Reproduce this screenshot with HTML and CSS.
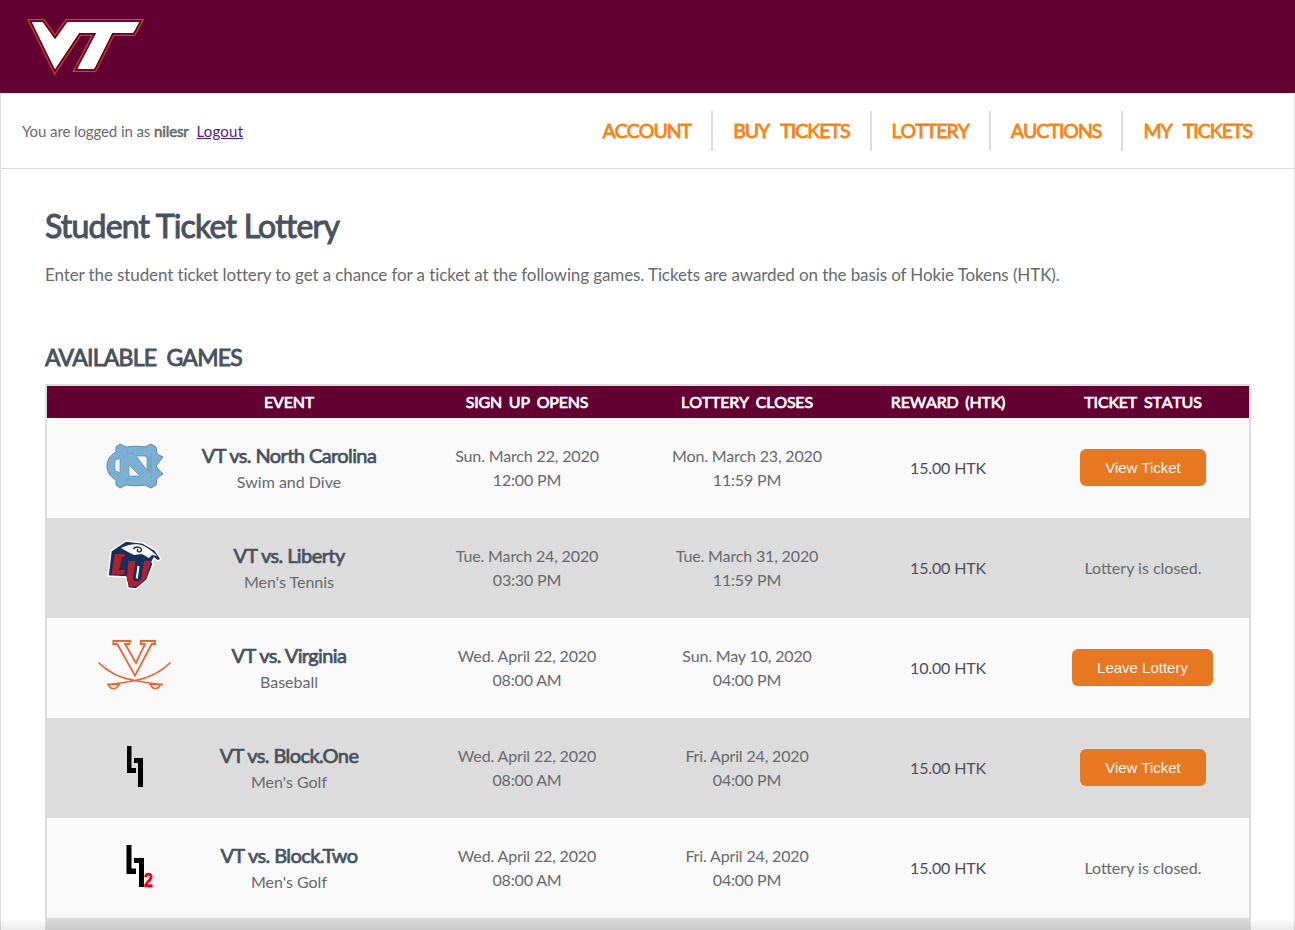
FILE: index.html
```html
<!DOCTYPE html>
<html lang="en">
<head>
    <meta charset="UTF-8">
    <meta name="viewport" content="width=device-width, initial-scale=1.0">
    <title>Student Ticket Lottery</title>
    <link rel="stylesheet" href="styles.css">
</head>
<body>
    <header class="banner">
        <svg class="vt-logo" viewBox="0 0 120 60" aria-label="VT">
            <g transform="translate(-26 -17)">
                <path class="vt-edge" d="M33.5 23.5H43.5L56 41 68.5 23.5H139.5L134 33.5H113L95 69.500H79L98 33.5H80L56 69.500Z"/>
                <path class="vt-gap" d="M33.5 23.5H43.5L56 41 68.5 23.5H139.5L134 33.5H113L95 69.500H79L98 33.5H80L56 69.500Z"/>
                <path class="vt-fill" d="M33.5 23.5H43.5L56 41 68.5 23.5H139.5L134 33.5H113L95 69.500H79L98 33.5H80L56 69.500Z"/>
            </g>
        </svg>
    </header>

    <div class="page">
        <nav class="topnav">
            <p class="login">You are logged in as <b>nilesr</b> <a href="#">Logout</a></p>
            <ul class="menu">
                <li><a href="#">ACCOUNT</a></li>
                <li><a href="#">BUY TICKETS</a></li>
                <li><a href="#">LOTTERY</a></li>
                <li><a href="#">AUCTIONS</a></li>
                <li><a href="#">MY TICKETS</a></li>
            </ul>
        </nav>

        <main class="content">
            <h1>Student Ticket Lottery</h1>
            <p class="intro">Enter the student ticket lottery to get a chance for a ticket at the following games. Tickets are awarded on the basis of Hokie Tokens (HTK).</p>

            <h2>AVAILABLE GAMES</h2>
            <table class="games">
                <colgroup>
                    <col class="col-logo"><col class="col-event"><col class="col-opens"><col class="col-closes"><col class="col-reward"><col class="col-status">
                </colgroup>
                <thead>
                    <tr>
                        <th></th>
                        <th>EVENT</th>
                        <th>SIGN UP OPENS</th>
                        <th>LOTTERY CLOSES</th>
                        <th>REWARD (HTK)</th>
                        <th>TICKET STATUS</th>
                    </tr>
                </thead>
                <tbody>
                    <tr>
                        <td class="logo-cell">
                            <svg class="team" viewBox="0 0 74 50">
                                <g transform="translate(9 4)">
                                    <path class="unc" d="M9 3 13 0 19 3C25 2 32 2 38 3L44 0 49 3 50 10 56 13 52 18 49 22 52 26 56 30 50 34 49 41 44 44 38 41C32 42 25 42 19 41L13 44 9 41 9 36C-3 30-3 14 9 8Z"/>
                                    <path class="unc-hole" d="M8.500 16 13 14.500V28.500L8.500 27C7.500 24 7.500 19 8.500 16ZM29 12H40V26ZM22 21 33 32H22Z"/>
                                    <path class="unc-line" d="M20 9H26L42 29V13H38M18 35H24M44 9V35"/>
                                </g>
                            </svg>
                        </td>
                        <td><span class="match">VT vs. North Carolina</span><span class="sport">Swim and Dive</span></td>
                        <td>Sun. March 22, 2020<br>12:00 PM</td>
                        <td>Mon. March 23, 2020<br>11:59 PM</td>
                        <td class="reward">15.00 HTK</td>
                        <td><button class="action view">View Ticket</button></td>
                    </tr>
                    <tr>
                        <td class="logo-cell">
                            <svg class="team" viewBox="0 0 74 50">
                                <g transform="translate(10 1)">
                                    <path class="lu-navy" d="M3 10 18 0 35 2 47 9 53 18 50 20 46 17 44 21 45 23 39 39 28 48 20 47 18 36 0 35Z"/>
                                    <path class="lu-white" d="M13 7C20 3 30 2 36 5 42 8 46 12 49 15L44 14 41 17 34 13 26 14 20 11Z"/>
                                    <path class="lu-line" d="M25 8C29 4 35 7 33 10 31 12 28 10 30 8"/>
                                    <path class="lu-red" d="M7 13H17L16.500 16H14L11 29H17L16 33.500H3.500Z"/>
                                    <path class="lu-red" d="M20.500 20H27.500L25 36.500C24.500 42 33 42 33.500 36.500L36 20H43L38 37.500 28.500 45.500H22L18.500 38.500Z"/>
                                    <path class="lu-slot" d="M30.500 25 28.800 37.500"/>
                                </g>
                            </svg>
                        </td>
                        <td><span class="match">VT vs. Liberty</span><span class="sport">Men's Tennis</span></td>
                        <td>Tue. March 24, 2020<br>03:30 PM</td>
                        <td>Tue. March 31, 2020<br>11:59 PM</td>
                        <td class="reward">15.00 HTK</td>
                        <td class="closed">Lottery is closed.</td>
                    </tr>
                    <tr>
                        <td class="logo-cell">
                            <svg class="team" viewBox="0 0 74 50">
                                <path class="uva-v" d="M15.300 1H32L31.300 4H27L38 23 47 4H42.700V1H57V4H53.700L37 35.700 19.300 4H15.300Z"/>
                                <path class="uva-blade" d="M0.500 22.500C10 32 22 38 37 40.500 46 42 56 44 65 44.500M72.500 22.500C63 32 51 38 37 40.500 28 42 18 44 9 44.500"/>
                                <path class="uva-hilt" d="M9 44.500H22M11 44.500C11 49.500 19 50 21 44.500M51 44.500H64M53 44.500C54 50 61 49.500 62 44.500"/>
                            </svg>
                        </td>
                        <td><span class="match">VT vs. Virginia</span><span class="sport">Baseball</span></td>
                        <td>Wed. April 22, 2020<br>08:00 AM</td>
                        <td>Sun. May 10, 2020<br>04:00 PM</td>
                        <td class="reward">10.00 HTK</td>
                        <td><button class="action leave">Leave Lottery</button></td>
                    </tr>
                    <tr>
                        <td class="logo-cell">
                            <svg class="team block" viewBox="0 0 74 50">
                                <path d="M29 6H33.500V28H38V33H29ZM36 18H45V47H40V23H36Z"/>
                            </svg>
                        </td>
                        <td><span class="match">VT vs. Block.One</span><span class="sport">Men's Golf</span></td>
                        <td>Wed. April 22, 2020<br>08:00 AM</td>
                        <td>Fri. April 24, 2020<br>04:00 PM</td>
                        <td class="reward">15.00 HTK</td>
                        <td><button class="action view">View Ticket</button></td>
                    </tr>
                    <tr>
                        <td class="logo-cell">
                            <svg class="team block" viewBox="0 0 74 50">
                                <path d="M28.500 5H33.500V28.500H38V34H28.500ZM36 18H46V47H41V23H36Z"/>
                                <text class="two" x="46" y="47" textLength="9" lengthAdjust="spacingAndGlyphs">2</text>
                            </svg>
                        </td>
                        <td><span class="match">VT vs. Block.Two</span><span class="sport">Men's Golf</span></td>
                        <td>Wed. April 22, 2020<br>08:00 AM</td>
                        <td>Fri. April 24, 2020<br>04:00 PM</td>
                        <td class="reward">15.00 HTK</td>
                        <td class="closed">Lottery is closed.</td>
                    </tr>
                    <tr>
                        <td colspan="6"></td>
                    </tr>
                </tbody>
            </table>
        </main>
    </div>
    <div class="fold-shadow"></div>
</body>
</html>
```
FILE: styles.css
```css
:root {
    --maroon: #630031;
    --orange: #ff7f0f;
    --button: #e87722;
    --line: #dddddd;
    --text: #666a6d;
    --heading: #47525e;
}

html, body {
    height: 100%;
    overflow: hidden;
}

body {
    margin: 0;
    font-family: Lato, "Liberation Sans", sans-serif;
    color: var(--text);
    background-color: white;
}

.banner {
    height: 93px;
    background-color: var(--maroon);
    display: flex;
    align-items: flex-start;
}

.vt-logo {
    width: 120px;
    height: 60px;
    margin: 16px 0 0 25px;
}

.vt-edge, .vt-gap, .vt-fill {
    stroke-linejoin: miter;
    stroke-miterlimit: 10;
}

.vt-edge {
    fill: none;
    stroke: #c8421c;
    stroke-width: 7;
}

.vt-gap {
    fill: none;
    stroke: var(--maroon);
    stroke-width: 4.400;
}

.vt-fill {
    fill: white;
    stroke: white;
    stroke-width: 1;
}

.page {
    border-left: 1px solid var(--line);
    border-right: 1px solid var(--line);
}

.topnav {
    height: 75px;
    display: flex;
    align-items: center;
    justify-content: space-between;
    border-bottom: 1px solid var(--line);
    padding: 0 22px 0 21px;
}

.login {
    margin: 0;
    font-size: 15px;
    letter-spacing: -0.1px;
}

.login b {
    font-weight: 400;
    -webkit-text-stroke: 0.6px var(--text);
    margin-right: 4px;
}

.login a {
    color: #551a8b;
    letter-spacing: 0.2px;
}

.menu {
    list-style: none;
    display: flex;
    margin: 0;
    padding: 0;
}

.menu li {
    height: 40px;
    display: flex;
    align-items: center;
    padding: 0 20px 0 20px;
    border-left: 2px solid var(--line);
}

.menu li:first-child {
    border-left: none;
}

.menu a {
    color: var(--orange);
    font-size: 19.500px;
    font-weight: 400;
    font-kerning: none;
    -webkit-text-stroke: 0.8px var(--orange);
    letter-spacing: -1px;
    word-spacing: 7px;
    text-decoration: none;
}

.content {
    padding: 0 43px 0 44px;
}

h1 {
    margin: 37px 0 0;
    font-size: 32px;
    font-weight: 400;
    -webkit-text-stroke: 1px var(--heading);
    line-height: 40px;
    letter-spacing: -0.8px;
    color: var(--heading);
}

.intro {
    margin: 16px 0 0;
    font-size: 17px;
    line-height: 26px;
    letter-spacing: -0.1px;
}

h2 {
    margin: 54px 0 12px;
    font-size: 23px;
    font-weight: 400;
    -webkit-text-stroke: 0.9px var(--heading);
    line-height: 30px;
    letter-spacing: -0.75px;
    word-spacing: 5px;
    color: var(--heading);
}

.games {
    width: 1206px;
    table-layout: fixed;
    border-collapse: separate;
    border-spacing: 0;
    border: 2px solid var(--line);
    text-align: center;
    font-size: 16px;
    letter-spacing: -0.15px;
    line-height: 24px;
}

.col-logo { width: 133px; }
.col-event { width: 218px; }
.col-opens { width: 258px; }
.col-closes { width: 182px; }
.col-reward { width: 220px; }

.games th {
    height: 32px;
    padding: 0;
    background-color: var(--maroon);
    color: white;
    font-size: 16px;
    font-weight: 400;
    font-kerning: none;
    -webkit-text-stroke: 0.7px white;
    letter-spacing: -0.2px;
    word-spacing: 3px;
}

.games th:last-child, .games td:last-child {
    padding-right: 21px;
}

.games td {
    height: 100px;
    padding: 0;
}

.games tbody tr:nth-child(odd) {
    background-color: #f9f9f9;
}

.games tbody tr:nth-child(even) {
    background-color: #dcdcdc;
}

.logo-cell {
    text-align: right;
}

.team {
    display: block;
    width: 74px;
    height: 50px;
    margin: -6px 8px 0 auto;
}

.match {
    display: block;
    font-size: 20px;
    font-weight: 400;
    -webkit-text-stroke: 0.7px var(--heading);
    letter-spacing: -0.6px;
    line-height: 26px;
    margin-bottom: 2px;
    color: var(--heading);
}

.sport {
    display: block;
    font-size: 16px;
    letter-spacing: 0;
    line-height: 24px;
}

.reward {
    color: #4a4f52;
}

.closed {
    color: var(--text);
    letter-spacing: 0;
}

.action {
    height: 37px;
    margin-bottom: 2px;
    border: none;
    border-radius: 6px;
    background-color: var(--button);
    color: #fff6ee;
    font-family: "Liberation Sans", sans-serif;
    font-size: 15px;
}

.view {
    width: 126px;
}

.leave {
    width: 141px;
    margin-right: 1px;
}

.unc {
    fill: #7bafd4;
    stroke: #5c86ab;
    stroke-width: 1;
}

.unc-hole {
    fill: #f2f4f6;
    stroke: #5c86ab;
    stroke-width: 0.6;
}

.unc-line {
    fill: none;
    stroke: #6d97bb;
    stroke-width: 0.6;
}

.lu-navy {
    fill: #15305f;
    stroke: white;
    stroke-width: 1.500;
    stroke-linejoin: round;
}

.lu-white { fill: white; }
.lu-red { fill: #b3202c; }

.lu-line {
    fill: none;
    stroke: #15305f;
    stroke-width: 1.500;
}

.lu-slot {
    fill: none;
    stroke: white;
    stroke-width: 2;
}

.uva-v {
    fill: white;
    stroke: #f0622f;
    stroke-width: 1.800;
}

.uva-blade, .uva-hilt {
    fill: none;
    stroke: #f0622f;
    stroke-width: 1.600;
}

.block path {
    fill: black;
}

.two {
    fill: #e8000d;
    stroke: #e8000d;
    stroke-width: 0.6;
    font-family: "Liberation Sans", sans-serif;
    font-size: 21px;
    font-weight: 700;
    letter-spacing: 0;
}

.fold-shadow {
    position: fixed;
    left: 0;
    right: 0;
    bottom: 0;
    height: 12px;
    background: linear-gradient(rgba(0, 0, 0, 0), rgba(0, 0, 0, 0.08));
}
```
